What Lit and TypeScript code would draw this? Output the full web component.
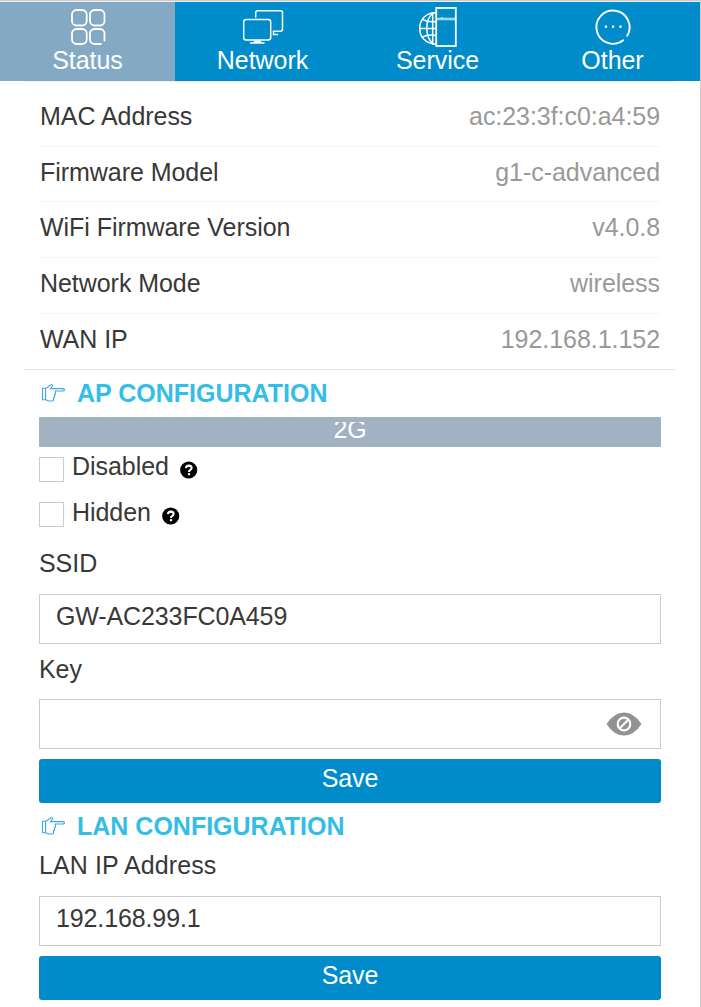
import { LitElement, html, css, svg } from "lit";
import { customElement } from "lit/decorators.js";
import { classMap } from "lit/directives/class-map.js";

const statusIcon = svg`
  <rect x="12" y="8" width="14.700" height="15.500" rx="4.500"/>
  <rect x="30" y="8" width="14.500" height="15.500" rx="4.500"/>
  <rect x="12" y="27" width="14.700" height="15" rx="4.500"/>
  <path d="M44.500 38.500V31.500a4.500 4.500 0 0 0-4.500-4.500H34.500a4.500 4.500 0 0 0-4.500 4.500V37.500a4.500 4.500 0 0 0 4.500 4.500H41"/>`;

const networkIcon = svg`
  <g stroke-width="1.500">
  <rect x="8.700" y="17.500" width="27" height="20.500" rx="2.500"/>
  <path d="M20.700 15V10.700a2 2 0 0 1 2-2H45.500a2 2 0 0 1 2 2V27.200a2 2 0 0 1-2 2H38.500V32.500H42.500"/>
  <path d="M19.500 38.500h6l1.300 2.500h-8.600z" fill="#fff" stroke="none"/>
  <path d="M15.500 41.100H29"/></g>`;

const serviceIcon = svg`
  <g stroke-width="1.500">
  <path d="M25.500 10.700C15 10.700 9.700 18.500 9.700 26.500S15 41.500 25.500 42.200"/>
  <path d="M23.500 11C14.500 17 14.500 35 23.500 42M22.700 10.700V42M9.700 26.500H26M12.500 17.500Q18.500 20.500 26 19.500M12 35.200Q18 32.200 26 33.500"/>
  <rect x="26.200" y="6" width="19.600" height="38" stroke-width="1.800" stroke-linejoin="miter"/>
  <path d="M27 17H45" stroke-width="2.600" opacity=".65" stroke-linecap="butt"/><path d="M31.500 15.800h1" stroke-width="1"/></g>`;

const otherIcon = svg`
  <path d="M42.200 33.800A16.600 16.600 0 1 0 38.200 38.300" stroke-width="1.900"/>
  <g fill="#fff" stroke="none"><rect x="19.800" y="23.500" width="2.300" height="2.300"/><rect x="26.900" y="23.500" width="2.300" height="2.300"/><rect x="34.300" y="23.500" width="2.300" height="2.300"/></g>`;

const tabs = [
  { label: "Status", icon: statusIcon },
  { label: "Network", icon: networkIcon },
  { label: "Service", icon: serviceIcon },
  { label: "Other", icon: otherIcon },
];

const details = [
  ["MAC Address", "ac:23:3f:c0:a4:59"],
  ["Firmware Model", "g1-c-advanced"],
  ["WiFi Firmware Version", "v4.0.8"],
  ["Network Mode", "wireless"],
  ["WAN IP", "192.168.1.152"],
];

const hand = html`<svg class="hand" width="24" height="20" viewBox="0 0 24 20">
  <path d="M1.500 4.200H5L10 .8Q12 .4 11.400 2L9.500 4.600H21.800Q23.500 4.900 23.500 5.900Q23.400 7 21.800 7H14.300L14.500 10L13.600 10.300V13.300L12.500 13.500V16Q12 17 11 17H7.500L5 15.700H1.500ZM4.600 4.500V15.700"/>
</svg>`;

const help = html`<svg class="help" width="18" height="18" viewBox="0 0 18 18">
  <circle cx="8.700" cy="9" r="8.600"/>
  <path d="M6 7.100Q6.100 4.600 8.900 4.600Q11.600 4.700 11.600 6.900Q11.600 8 10.300 8.800Q9 9.500 9 10.900"/>
  <rect x="7.900" y="12.100" width="2.200" height="2.100"/>
</svg>`;

@customElement("app-root")
export class AppRoot extends LitElement {
  static styles = css`
    :host {
      display: block;
      box-sizing: border-box;
      width: 701px;
      height: 1007px;
      overflow: hidden;
      background: #fff;
      border-top: 1px solid #ccc;
      border-right: 1px solid #ccc;
      color: #383838;
      font: 25px/30px "Liberation Sans", Arial, sans-serif;
      letter-spacing: -.05px;
    }
    .tabs {
      display: grid;
      grid-template-columns: repeat(4, 1fr);
      height: 79px;
      border-top: 1px solid #eee;
      color: #fff;
    }
    .tab {
      display: flex;
      flex-direction: column;
      align-items: center;
      background: #008bca;
    }
    .tab.active { background: #84a9c4; }
    .tab svg {
      width: 56px;
      height: 50px;
      fill: none;
      stroke: #fff;
      stroke-width: 1.8;
      stroke-linecap: round;
    }
    .tab span { margin-top: -7px; }
    .details {
      margin: 0 24px;
      padding: 9px 16px 0;
      border-top: 1px solid #eee;
      border-bottom: 1px solid #e6e6e6;
      height: 278px;
    }
    .row {
      display: flex;
      justify-content: space-between;
      box-sizing: border-box;
      height: 55.65px;
      padding-top: 10px;
      border-bottom: 1px solid #f4f4f4;
    }
    .row:last-child { border: 0; }
    .value { color: #999; }
    .form { display: flex; flex-direction: column; padding: 0 39px; }
    h2 {
      display: flex;
      gap: 12px;
      margin: 8px 0 9px 2px;
      font-size: 25px;
      line-height: 30px;
      letter-spacing: 0;
      color: #33bde7;
    }
    .hand { margin-top: 6px; fill: none; stroke: #3ba8df; stroke-width: 1.1; }
    .band {
      box-sizing: border-box;
      height: 30px;
      padding-top: 5px;
      border-radius: 1px;
      background: #a3b2c3;
      color: #fff;
      text-align: center;
    }
    .band span { display: block; height: 20px; overflow: hidden; line-height: 14px; }
    .check { display: flex; height: 45px; margin-top: 10px; }
    .check + .check { margin-top: 0; }
    .box { box-sizing: border-box; width: 25px; height: 25px; border: 1px solid #ccc; }
    .check span { margin: -6px 0 0 8px; }
    .check + .check span { margin-top: -5px; }
    .help { margin: 4px 0 0 11px; fill: #000; }
    .check + .check .help { margin-top: 5px; }
    .help path { fill: none; stroke: #fff; stroke-width: 2.1; }
    .help rect { fill: #fff; }
    .field { height: 30px; margin-top: 1px; }
    .input {
      display: flex;
      justify-content: space-between;
      box-sizing: border-box;
      height: 50px;
      margin-top: 16px;
      padding: 6px 18px 0 16px;
      border: 1px solid #ccc;
      letter-spacing: -.12px;
    }
    .eye { margin-top: 5px; }
    .input + .field { margin-top: 10px; }
    .input + .field + .input { margin-top: 15px; }
    .save {
      height: 44px;
      margin-top: 10px;
      padding: 4px 0 0;
      border: 0;
      border-radius: 3px;
      background: #008bca;
      color: #fff;
      font: inherit;
      line-height: 30px;
      letter-spacing: -.1px;
      display: flex;
      justify-content: center;
      align-items: flex-start;
    }
    .lan { margin-bottom: 9px; }
    .lan + .field { margin-top: 0; letter-spacing: .1px; }
  `;

  render() {
    return html`
      <nav class="tabs">
        ${tabs.map((t, i) => html`<div class=${classMap({ tab: true, active: i === 0 })}>
          <svg viewBox="0 0 56 50">${t.icon}</svg><span>${t.label}</span>
        </div>`)}
      </nav>
      <section class="details">
        ${details.map(([k, v]) => html`<div class="row"><span>${k}</span><span class="value">${v}</span></div>`)}
      </section>
      <main class="form">
        <h2>${hand}<span>AP CONFIGURATION</span></h2>
        <div class="band"><span>2G</span></div>
        <div class="check"><i class="box"></i><span>Disabled</span>${help}</div>
        <div class="check"><i class="box"></i><span>Hidden</span>${help}</div>
        <div class="field">SSID</div>
        <div class="input"><span>GW-AC233FC0A459</span></div>
        <div class="field">Key</div>
        <div class="input"><span></span>
          <svg class="eye" width="36" height="26" viewBox="0 0 36 26">
            <path d="M.5 13Q8 1.500 18 1.500T35.500 13Q28 24.500 18 24.500T.5 13Z" fill="#929292"/>
            <circle cx="18" cy="13" r="6.300" fill="#929292" stroke="#fff" stroke-width="2.200"/>
            <path d="M14 17L22 9" stroke="#fff" stroke-width="2.200"/>
          </svg>
        </div>
        <button class="save">Save</button>
        <h2 class="lan">${hand}<span>LAN CONFIGURATION</span></h2>
        <div class="field">LAN IP Address</div>
        <div class="input"><span>192.168.99.1</span></div>
        <button class="save">Save</button>
      </main>
    `;
  }
}
